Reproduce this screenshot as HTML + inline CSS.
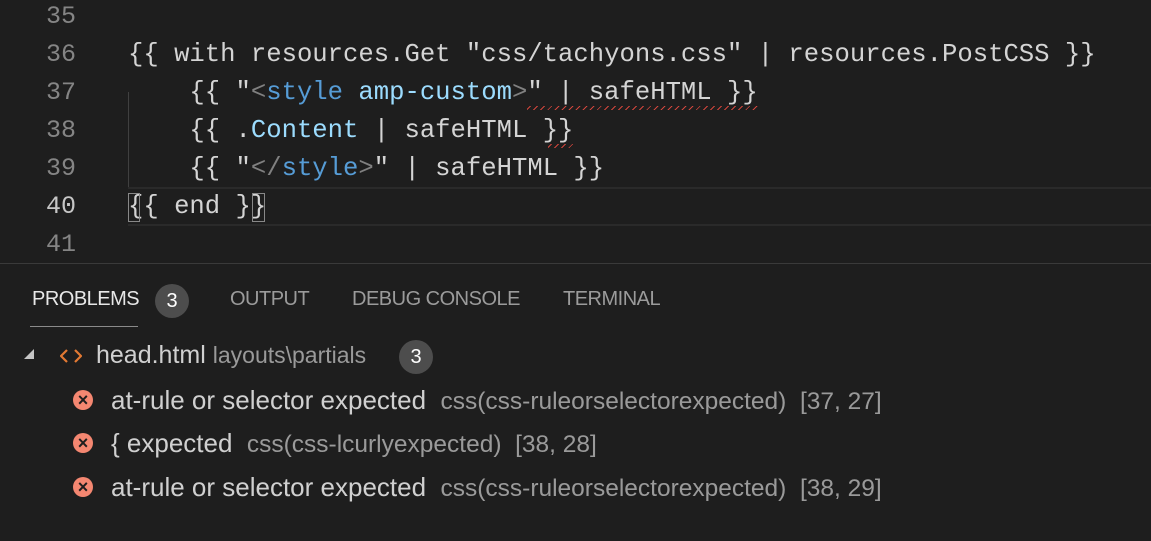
<!DOCTYPE html>
<html><head><meta charset="utf-8"><style>
body{margin:0;width:1151px;height:541px;background:#1e1e1e;overflow:hidden;position:relative;font-family:"Liberation Sans",sans-serif}
.ln{position:absolute;left:0;width:76px;text-align:right;font:25px/38px "Liberation Mono",monospace;color:#858585}
.cd{position:absolute;left:128px;font:25.6px/38px "Liberation Mono",monospace;color:#d4d4d4;white-space:pre}
.b{color:#569cd6}.a{color:#9cdcfe}.g{color:#808080}
.sq{position:absolute;height:4px;background:repeating-linear-gradient(135deg,transparent 0 2px,#d0453c 2px 3px,transparent 3px 5px)}
.tab{position:absolute;top:288px;font-size:20px;color:#9b9b9b;letter-spacing:-0.5px}
.badge{position:absolute;width:34px;height:34px;border-radius:17px;background:#4d4d4d;color:#fff;font-size:20px;text-align:center;line-height:34px}
.row{position:absolute;left:111px;font-size:26px;color:#d0d0d0;white-space:pre}
.row span{color:#9a9a9a;font-size:24.5px}
.err{position:absolute;left:73px;width:20px;height:20px;border-radius:50%;background:#f48771;color:#1e1e1e;font:bold 18px/20px "Liberation Sans",sans-serif;text-align:center}
</style></head><body>
<div style="position:absolute;left:128px;top:187px;width:1023px;height:35px;border-top:2px solid #2a2a2a;border-bottom:2px solid #2a2a2a"></div>
<div style="position:absolute;left:128px;top:92px;width:1px;height:95px;background:#404040"></div>
<div class="ln" style="top:-2px">35</div>
<div class="ln" style="top:36px">36</div>
<div class="ln" style="top:74px">37</div>
<div class="ln" style="top:112px">38</div>
<div class="ln" style="top:150px">39</div>
<div class="ln" style="top:188px;color:#c6c6c6">40</div>
<div class="ln" style="top:226px">41</div>
<div class="cd" style="top:36px">{{ with resources.Get "css/tachyons.css" | resources.PostCSS }}</div>
<div class="cd" style="top:74px">    {{ "<span class="g">&lt;</span><span class="b">style</span> <span class="a">amp-custom</span><span class="g">&gt;</span>" | safeHTML }}</div>
<div class="cd" style="top:112px">    {{ .<span class="a">Content</span> | safeHTML }}</div>
<div class="cd" style="top:150px">    {{ "<span class="g">&lt;/</span><span class="b">style</span><span class="g">&gt;</span>" | safeHTML }}</div>
<div class="cd" style="top:188px">{{ end }}</div>
<div style="position:absolute;left:128px;top:193px;width:12px;height:29px;border:1px solid #888;box-sizing:border-box"></div>
<div style="position:absolute;left:252px;top:193px;width:13px;height:29px;border:1px solid #888;box-sizing:border-box"></div>
<div class="sq" style="left:527px;top:106px;width:232px"></div>
<div class="sq" style="left:548px;top:144px;width:26px"></div>
<div style="position:absolute;left:0;top:263px;width:1151px;height:1px;background:#3a3a3a"></div>
<div class="tab" style="left:32px;color:#e7e7e7">PROBLEMS</div>
<div class="badge" style="left:155px;top:284px">3</div>
<div style="position:absolute;left:30px;top:326px;width:108px;height:1px;background:#8a8a8a"></div>
<div class="tab" style="left:230px">OUTPUT</div>
<div class="tab" style="left:352px">DEBUG CONSOLE</div>
<div class="tab" style="left:563px">TERMINAL</div>
<div style="position:absolute;left:24px;top:349px;width:0;height:0;border-left:10px solid transparent;border-bottom:10px solid #c5c5c5"></div>
<svg style="position:absolute;left:60px;top:348px" width="22" height="16" viewBox="0 0 22 16"><path d="M7 2 L1 8 L7 14 M15 2 L21 8 L15 14" fill="none" stroke="#e37933" stroke-width="2.2"/></svg>
<div class="row" style="top:341px;left:96px;font-size:25px">head.html <span style="font-size:23px">layouts\partials</span></div>
<div class="badge" style="left:399px;top:340px">3</div>
<div class="err" style="top:390px">×</div>
<div class="row" style="top:385px">at-rule or selector expected  <span>css(css-ruleorselectorexpected)  [37, 27]</span></div>
<div class="err" style="top:433px">×</div>
<div class="row" style="top:428px">{ expected  <span>css(css-lcurlyexpected)  [38, 28]</span></div>
<div class="err" style="top:477px">×</div>
<div class="row" style="top:472px">at-rule or selector expected  <span>css(css-ruleorselectorexpected)  [38, 29]</span></div>
</body></html>
